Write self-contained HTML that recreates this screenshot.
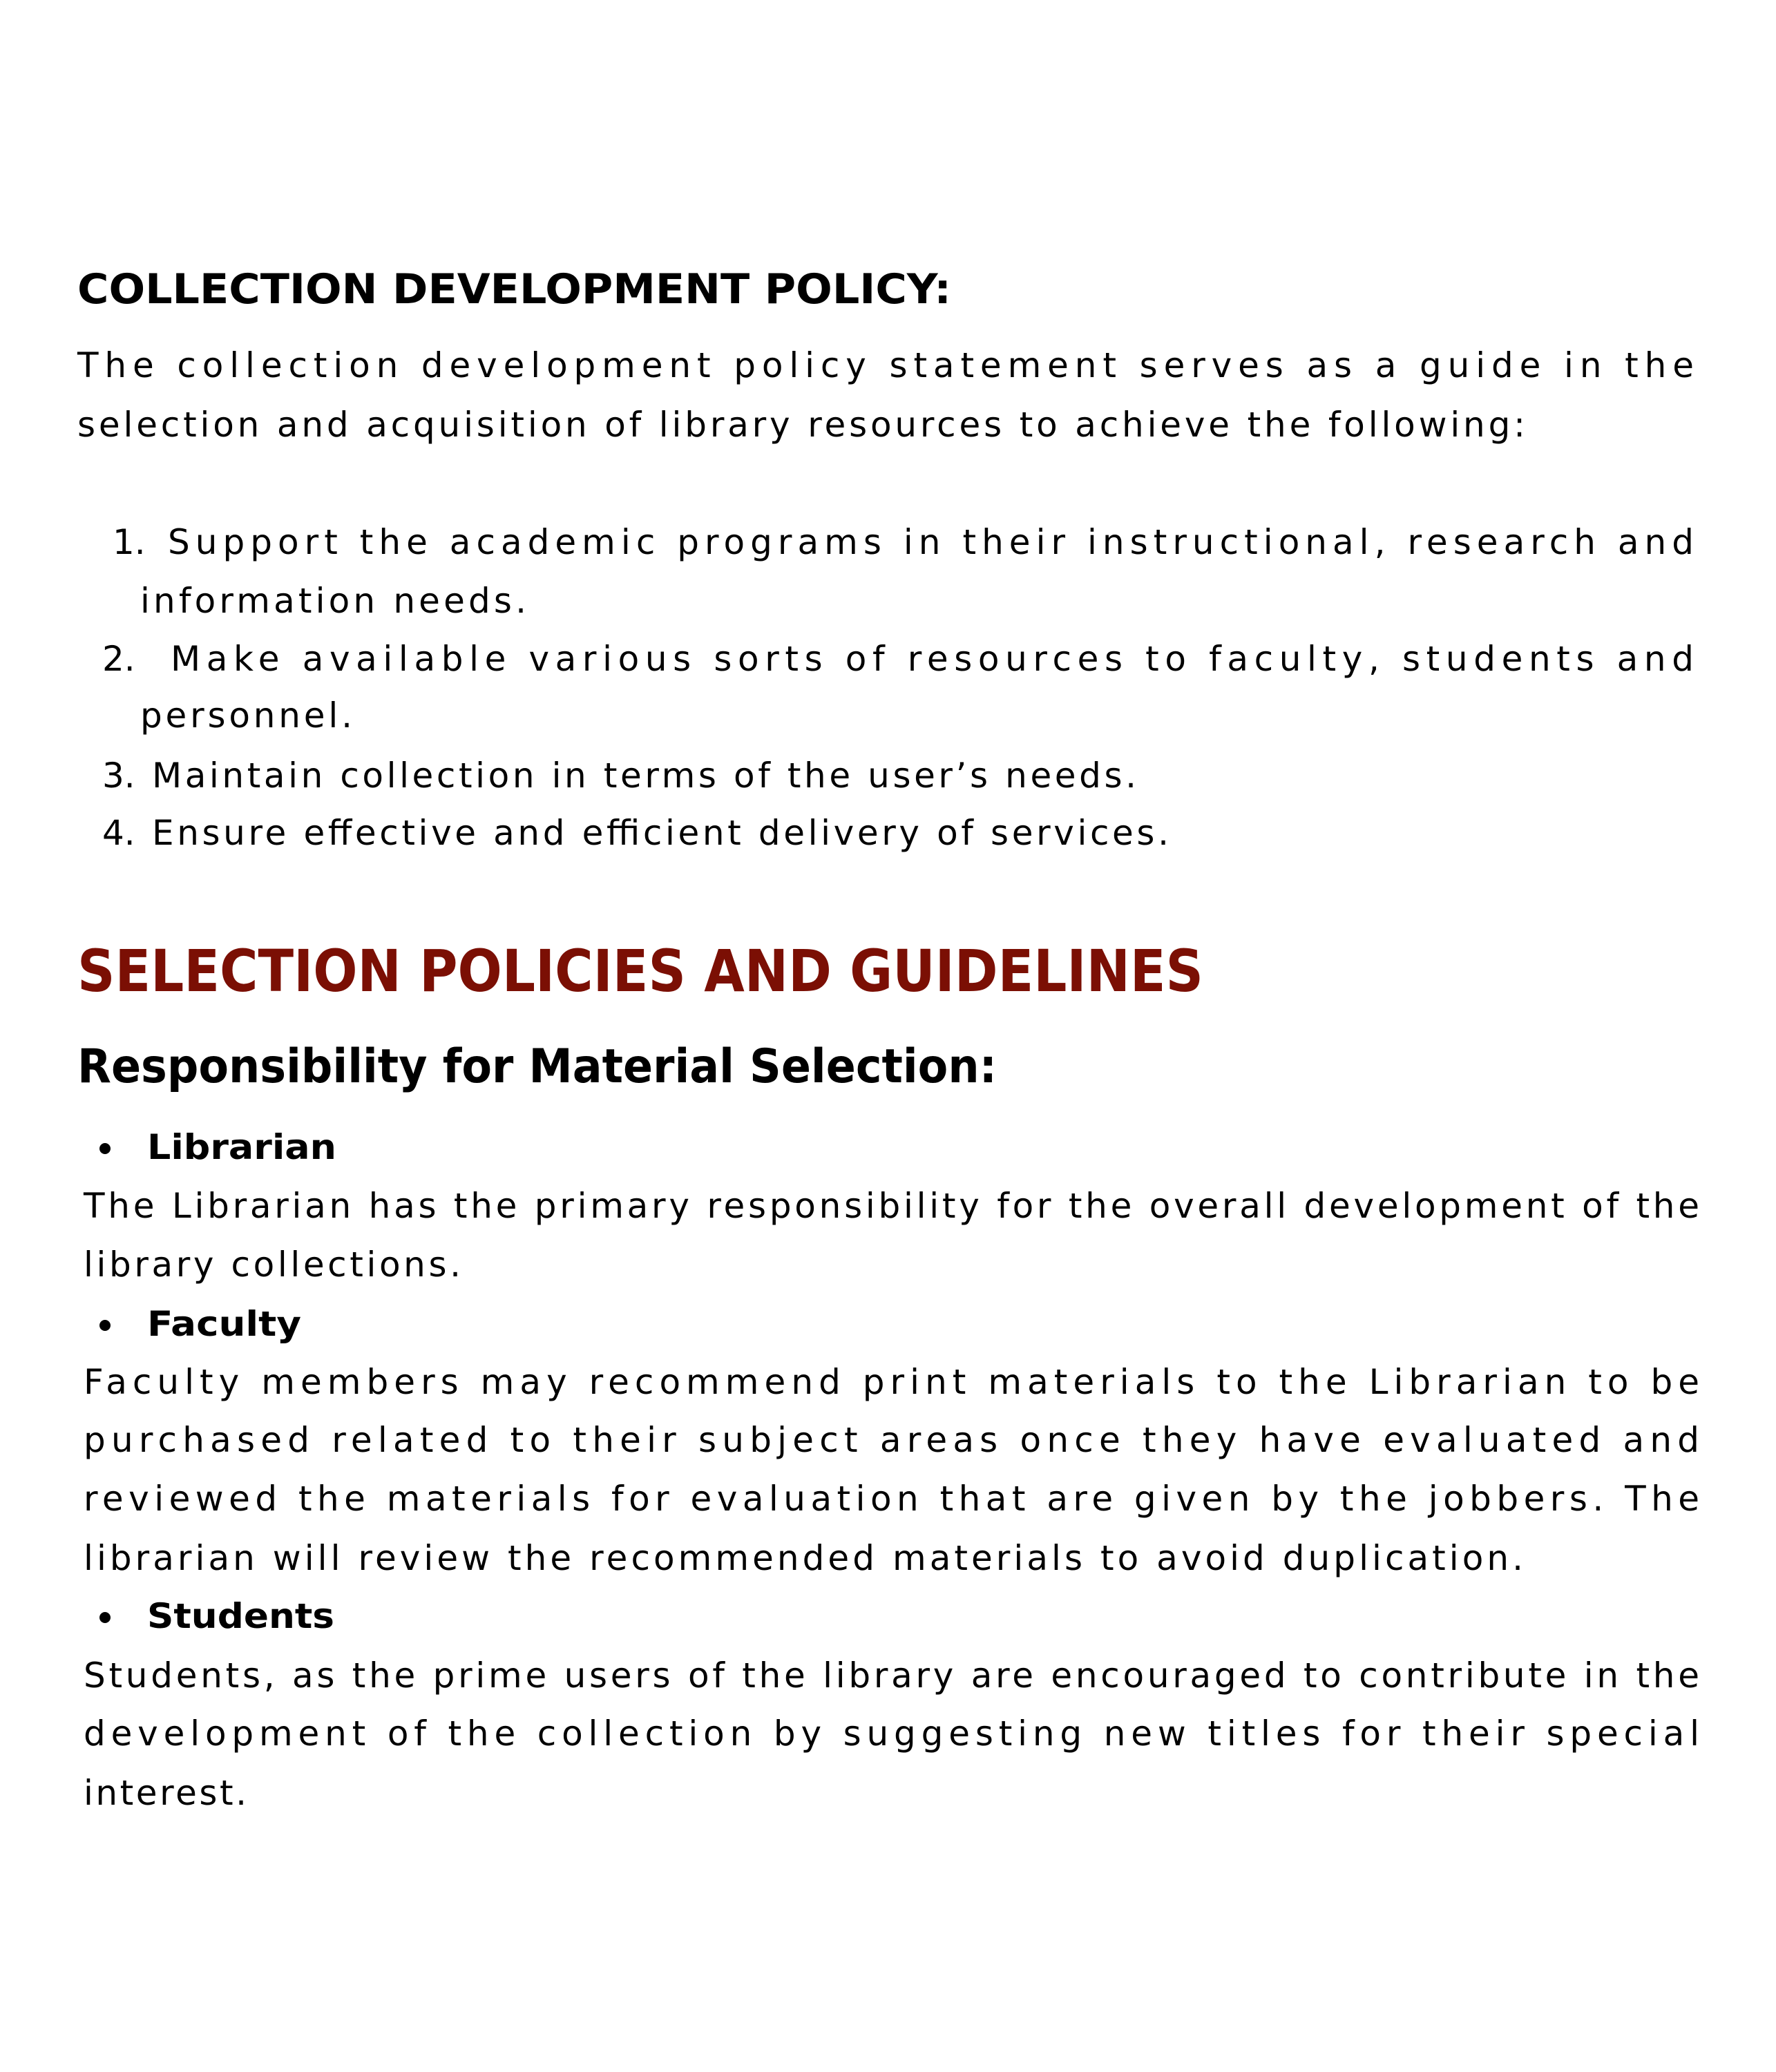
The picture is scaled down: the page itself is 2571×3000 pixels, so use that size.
<!DOCTYPE html>
<html><head><meta charset="utf-8"><style>
html,body{margin:0;padding:0;background:#fff;}
svg{display:block;}
text{font-family:"DejaVu Sans","Liberation Sans",sans-serif;fill:#000;}
.b{font-size:50px;}
.bb{font-size:50px;font-weight:bold;}
</style></head><body>
<svg width="2571" height="3000" viewBox="0 0 2571 3000" xmlns="http://www.w3.org/2000/svg">
<rect width="2571" height="3000" fill="#fff"/>
<text x="112" y="439" font-size="60" font-weight="bold" textLength="1265" lengthAdjust="spacingAndGlyphs">COLLECTION DEVELOPMENT POLICY:</text>

<text class="b" x="112" y="546" textLength="2340" lengthAdjust="spacing">The collection development policy statement serves as a guide in the</text>
<text class="b" x="112" y="632" textLength="2096" lengthAdjust="spacing">selection and acquisition of library resources to achieve the following:</text>

<text class="b" x="163" y="802">1.</text>
<text class="b" x="243" y="802" textLength="2209" lengthAdjust="spacing">Support the academic programs in their instructional, research and</text>
<text class="b" x="203" y="887" textLength="559" lengthAdjust="spacing">information needs.</text>
<text class="b" x="148" y="971">2.</text>
<text class="b" x="247" y="971" textLength="2205" lengthAdjust="spacing">Make available various sorts of resources to faculty, students and</text>
<text class="b" x="203" y="1053" textLength="307" lengthAdjust="spacing">personnel.</text>
<text class="b" x="148" y="1140">3.</text>
<text class="b" x="220" y="1140" textLength="1425" lengthAdjust="spacing">Maintain collection in terms of the user’s needs.</text>
<text class="b" x="148" y="1223">4.</text>
<text class="b" x="220" y="1223" textLength="1472" lengthAdjust="spacing">Ensure effective and efficient delivery of services.</text>

<text x="112" y="1435" font-size="84" font-weight="bold" style="fill:#7b0f04" textLength="1630" lengthAdjust="spacingAndGlyphs">SELECTION POLICIES AND GUIDELINES</text>
<text x="112" y="1567" font-size="68" font-weight="bold" textLength="1331" lengthAdjust="spacingAndGlyphs">Responsibility for Material Selection:</text>

<circle cx="152" cy="1663" r="8"/>
<text class="bb" x="213" y="1678" textLength="274" lengthAdjust="spacingAndGlyphs">Librarian</text>
<text class="b" x="121" y="1763" textLength="2339" lengthAdjust="spacing">The Librarian has the primary responsibility for the overall development of the</text>
<text class="b" x="121" y="1848" textLength="546" lengthAdjust="spacing">library collections.</text>

<circle cx="152" cy="1919" r="8"/>
<text class="bb" x="213" y="1934" textLength="223" lengthAdjust="spacingAndGlyphs">Faculty</text>
<text class="b" x="121" y="2018" textLength="2339" lengthAdjust="spacing">Faculty members may recommend print materials to the Librarian to be</text>
<text class="b" x="121" y="2102" textLength="2339" lengthAdjust="spacing">purchased related to their subject areas once they have evaluated and</text>
<text class="b" x="121" y="2187" textLength="2339" lengthAdjust="spacing">reviewed the materials for evaluation that are given by the jobbers. The</text>
<text class="b" x="121" y="2273" textLength="2084" lengthAdjust="spacing">librarian will review the recommended materials to avoid duplication.</text>

<circle cx="152" cy="2342" r="8"/>
<text class="bb" x="213" y="2357" textLength="271" lengthAdjust="spacingAndGlyphs">Students</text>
<text class="b" x="121" y="2443" textLength="2339" lengthAdjust="spacing">Students, as the prime users of the library are encouraged to contribute in the</text>
<text class="b" x="121" y="2527" textLength="2339" lengthAdjust="spacing">development of the collection by suggesting new titles for their special</text>
<text class="b" x="121" y="2613" textLength="236" lengthAdjust="spacing">interest.</text>
</svg>
</body></html>
